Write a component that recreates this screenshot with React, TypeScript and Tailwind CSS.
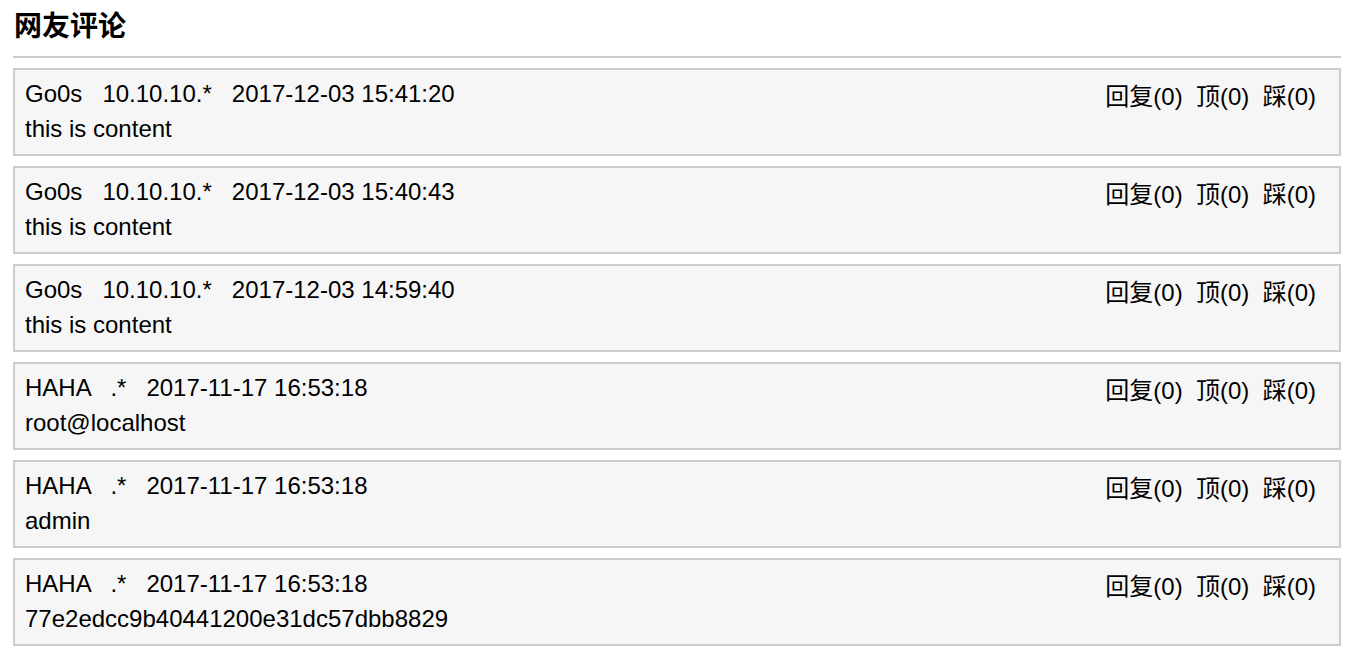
const comments = [
  { user: "Go0s", ip: "10.10.10.*", time: "2017-12-03 15:41:20", content: "this is content" },
  { user: "Go0s", ip: "10.10.10.*", time: "2017-12-03 15:40:43", content: "this is content" },
  { user: "Go0s", ip: "10.10.10.*", time: "2017-12-03 14:59:40", content: "this is content" },
  { user: "HAHA", ip: ".*", time: "2017-11-17 16:53:18", content: "root@localhost" },
  { user: "HAHA", ip: ".*", time: "2017-11-17 16:53:18", content: "admin" },
  { user: "HAHA", ip: ".*", time: "2017-11-17 16:53:18", content: "77e2edcc9b40441200e31dc57dbb8829" },
];

const font = { fontFamily: "'Liberation Sans', Arial, 'Noto Sans CJK SC', sans-serif" };

export default function App() {
  return (
    <div className="bg-white min-h-screen text-black" style={font}>
      <div className="ml-[13px] w-[1328px]">
        {/* title */}
        <h2 className="pl-[1px] pt-[9px] h-[56px] text-[28px] leading-[36px] font-bold">网友评论</h2>
        <div className="h-[2px] bg-[#cccccc]" />

        <div className="flex flex-col gap-[10px] pt-[10px]">
          {comments.map((c, i) => (
            <div
              key={i}
              className="flex justify-between border-2 border-[#cccccc] bg-[#f6f6f6] pl-[10px] pr-[23px] pt-[6px] pb-[6px] text-[24px] leading-[36px]"
            >
              <div>
                <div className="whitespace-pre">
                  {c.user}
                  {"   "}
                  {c.ip}
                  {"   "}
                  {c.time}
                </div>
                <div className="-mt-[1px] mb-[1px]">{c.content}</div>
              </div>
              <div className="whitespace-pre pt-[3px]">
                {"回复(0)  顶(0)  踩(0)"}
              </div>
            </div>
          ))}
        </div>
      </div>
    </div>
  );
}
